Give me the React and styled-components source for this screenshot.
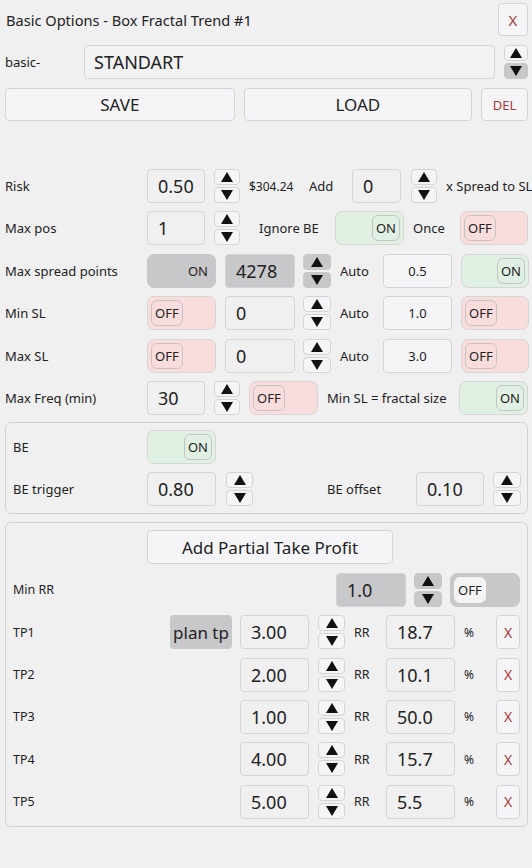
import React from "react";
import styled, { createGlobalStyle, css } from "styled-components";

const GlobalStyle = createGlobalStyle`
  html, body {
    margin: 0;
    padding: 0;
    background: #f0f0f0;
  }
  body {
    font-family: "Noto Sans", "Open Sans", Arial, sans-serif;
    color: #222;
  }
`;

const Page = styled.div`
  width: 532px;
  min-height: 868px;
  box-sizing: border-box;
  padding: 3px 4px 0 5px;
  background: #f0f0f0;
  overflow: hidden;
`;

const TitleBar = styled.div`
  display: flex;
  align-items: center;
  justify-content: space-between;
  height: 33px;
`;

const Title = styled.div`
  font-size: 14.6px;
  padding-left: 1px;
`;

const SmallButton = styled.button`
  width: ${(p) => p.w || 30}px;
  height: ${(p) => p.h || 33}px;
  padding: 0;
  border: 1px solid #d4d4d6;
  border-radius: 4px;
  background: #f5f5f7;
  color: #a83a3a;
  font-family: inherit;
  font-size: ${(p) => p.fs || 14}px;
  display: flex;
  align-items: center;
  justify-content: center;
`;

const PresetRow = styled.div`
  display: flex;
  align-items: center;
  margin-top: 9px;
  height: 34px;
`;

const PresetLabel = styled.div`
  width: 79px;
  font-size: 13px;
`;

const PresetBox = styled.div`
  flex: 1;
  height: 34px;
  box-sizing: border-box;
  border: 1px solid #d4d4d6;
  border-radius: 4px;
  background: #f2f2f3;
  font-size: 18px;
  display: flex;
  align-items: center;
  padding-left: 9px;
  margin-right: 9px;
`;

const ActionRow = styled.div`
  display: flex;
  gap: 9px;
  margin-top: 9px;
  height: 33px;
`;

const ActionButton = styled.button`
  width: ${(p) => p.w}px;
  height: 33px;
  border: 1px solid #d4d4d6;
  border-radius: 4px;
  background: #f5f5f7;
  font-family: inherit;
  font-size: 17px;
  color: #222;
  padding: 0;
`;

const Form = styled.div`
  display: flex;
  flex-direction: column;
  gap: 8.4px;
  margin-top: 48px;
`;

const Row = styled.div`
  display: flex;
  align-items: center;
  height: 34px;
  gap: 9px;
`;

const Label = styled.div`
  width: ${(p) => p.w || 133}px;
  flex: none;
  font-size: ${(p) => p.fs || 13}px;
  white-space: nowrap;
`;

const Text = styled.div`
  flex: none;
  width: ${(p) => (p.w ? `${p.w}px` : "auto")};
  font-size: ${(p) => p.fs || 13}px;
  white-space: nowrap;
  margin-left: ${(p) => p.ml || 0}px;
`;

const Field = styled.div`
  flex: none;
  width: ${(p) => p.w}px;
  height: 34px;
  box-sizing: border-box;
  border: 1px solid #d4d4d6;
  border-radius: 4px;
  background: ${(p) => (p.grey ? "#c8c8ca" : p.light ? "#f5f5f7" : "#f0f0f0")};
  display: flex;
  align-items: center;
  font-size: ${(p) => (p.small ? 13 : 18)}px;
  justify-content: ${(p) => (p.center ? "center" : "flex-start")};
  padding-left: ${(p) => (p.center ? 0 : 10)}px;
  margin-left: ${(p) => p.ml || 0}px;
`;

const SpinWrap = styled.div`
  flex: none;
  width: ${(p) => p.w || 26}px;
  height: 34px;
  display: flex;
  flex-direction: column;
  gap: 2px;
  margin-left: ${(p) => p.ml || 0}px;
`;

const SpinHalf = styled.div`
  flex: 1;
  box-sizing: border-box;
  border: 1px solid ${(p) => (p.grey ? "#c8c8ca" : "#d4d4d6")};
  border-radius: 4px;
  background: ${(p) => (p.grey ? "#c8c8ca" : "#f5f5f7")};
  display: flex;
  align-items: center;
  justify-content: center;
`;

const Tri = styled.svg`
  width: 12px;
  height: 10px;
  display: block;
`;

const tones = {
  green: "#e0f1e3",
  red: "#f9dcdc",
  grey: "#c8c8ca",
};

const Track = styled.div`
  flex: none;
  width: ${(p) => p.w || 69}px;
  height: 34px;
  box-sizing: border-box;
  border: 1px solid ${(p) => (p.tone === "grey" ? "#c8c8ca" : "#d6d6d6")};
  border-radius: 7px;
  background: ${(p) => tones[p.tone]};
  display: flex;
  align-items: center;
  justify-content: ${(p) => (p.on ? "flex-end" : "flex-start")};
  padding: 0 3px;
  margin-left: ${(p) => p.ml || 0}px;
`;

const Knob = styled.div`
  height: 26px;
  min-width: 26px;
  box-sizing: border-box;
  padding: 0 3px;
  border: 1px solid #c4c4c4;
  border-radius: 6px;
  font-size: 13px;
  display: flex;
  align-items: center;
  justify-content: center;
  ${(p) =>
    p.light &&
    css`
      background: #f4f4f4;
      border-color: #f4f4f4;
    `}
`;

const Panel = styled.div`
  margin-top: ${(p) => p.mt || 8}px;
  border: 1px solid #d2d2d2;
  border-radius: 6px;
  padding: 7px;
  display: flex;
  flex-direction: column;
  gap: 8.4px;
`;

const PanelButton = styled.button`
  width: 246px;
  height: 34px;
  margin-left: 134px;
  border: 1px solid #d4d4d6;
  border-radius: 4px;
  background: #f5f5f7;
  font-family: inherit;
  font-size: 17px;
  color: #222;
  padding: 0;
`;

const Right = styled.div`
  margin-left: auto;
  display: flex;
  align-items: center;
  gap: 9px;
`;

const PlanTp = styled.div`
  width: 62px;
  height: 34px;
  border-radius: 4px;
  background: #c8c8ca;
  font-size: 17px;
  display: flex;
  align-items: center;
  justify-content: center;
`;

const Spinner = ({ grey, w, ml }) => (
  <SpinWrap w={w} ml={ml}>
    <SpinHalf grey={grey}>
      <Tri viewBox="0 0 12 10">
        <path d="M6 0 L12 10 L0 10 Z" fill="#111" />
      </Tri>
    </SpinHalf>
    <SpinHalf grey={grey}>
      <Tri viewBox="0 0 12 10">
        <path d="M0 0 L12 0 L6 10 Z" fill="#111" />
      </Tri>
    </SpinHalf>
  </SpinWrap>
);

const Toggle = ({ on, tone, w, ml }) => (
  <Track on={on} tone={tone || (on ? "green" : "red")} w={w} ml={ml}>
    <Knob light={tone === "grey" && !on}>{on ? "ON" : "OFF"}</Knob>
  </Track>
);

const tps = [
  { name: "TP1", rr: "3.00", pct: "18.7", plan: true },
  { name: "TP2", rr: "2.00", pct: "10.1" },
  { name: "TP3", rr: "1.00", pct: "50.0" },
  { name: "TP4", rr: "4.00", pct: "15.7" },
  { name: "TP5", rr: "5.00", pct: "5.5" },
];

export default function App() {
  return (
    <>
      <GlobalStyle />
      <Page>
        <TitleBar>
          <Title>Basic Options - Box Fractal Trend #1</Title>
          <SmallButton w={30} fs={15}>
            X
          </SmallButton>
        </TitleBar>

        <PresetRow>
          <PresetLabel>basic-</PresetLabel>
          <PresetBox>STANDART</PresetBox>
          <SpinWrap w={24}>
            <SpinHalf>
              <Tri viewBox="0 0 12 10">
                <path d="M6 0 L12 10 L0 10 Z" fill="#111" />
              </Tri>
            </SpinHalf>
            <SpinHalf grey>
              <Tri viewBox="0 0 12 10">
                <path d="M0 0 L12 0 L6 10 Z" fill="#111" />
              </Tri>
            </SpinHalf>
          </SpinWrap>
        </PresetRow>

        <ActionRow>
          <ActionButton w={230}>SAVE</ActionButton>
          <ActionButton w={229}>LOAD</ActionButton>
          <SmallButton w={47} fs={13}>
            DEL
          </SmallButton>
        </ActionRow>

        <Form>
          <Row>
            <Label>Risk</Label>
            <Field w={58}>0.50</Field>
            <Spinner />
            <Text w={51} fs={12}>
              $304.24
            </Text>
            <Text w={34}>Add</Text>
            <Field w={49}>0</Field>
            <Spinner ml={1} />
            <Text>x Spread to SL</Text>
          </Row>
          <Row>
            <Label>Max pos</Label>
            <Field w={58}>1</Field>
            <Spinner />
            <Text w={67} ml={10}>
              Ignore BE
            </Text>
            <Toggle on w={69} />
            <Text w={38}>Once</Text>
            <Toggle on={false} w={68} />
          </Row>
          <Row>
            <Label>Max spread points</Label>
            <Toggle on tone="grey" w={69} />
            <Field w={70} grey>
              4278
            </Field>
            <Spinner grey w={28} ml={-1} />
            <Text w={34}>Auto</Text>
            <Field w={69} light small center>
              0.5
            </Field>
            <Toggle on w={68} />
          </Row>
          <Row>
            <Label>Min SL</Label>
            <Toggle on={false} w={69} />
            <Field w={70}>0</Field>
            <Spinner w={28} ml={-1} />
            <Text w={34}>Auto</Text>
            <Field w={69} light small center>
              1.0
            </Field>
            <Toggle on={false} w={68} />
          </Row>
          <Row>
            <Label>Max SL</Label>
            <Toggle on={false} w={69} />
            <Field w={70}>0</Field>
            <Spinner w={28} ml={-1} />
            <Text w={34}>Auto</Text>
            <Field w={69} light small center>
              3.0
            </Field>
            <Toggle on={false} w={68} />
          </Row>
          <Row>
            <Label>Max Freq (min)</Label>
            <Field w={58}>30</Field>
            <Spinner />
            <Toggle on={false} w={69} />
            <Text w={123}>Min SL = fractal size</Text>
            <Toggle on w={69} />
          </Row>
        </Form>

        <Panel mt={7}>
          <Row>
            <Label w={125}>BE</Label>
            <Toggle on w={69} />
          </Row>
          <Row>
            <Label w={125}>BE trigger</Label>
            <Field w={69}>0.80</Field>
            <Spinner w={27} ml={1} />
            <Text w={80} ml={65}>
              BE offset
            </Text>
            <Field w={68}>0.10</Field>
            <Spinner w={28} />
          </Row>
        </Panel>

        <Panel mt={8}>
          <PanelButton>Add Partial Take Profit</PanelButton>
          <Row>
            <Label w={80} fs={12.5}>
              Min RR
            </Label>
            <Right>
              <Field w={70} grey>
                1.0
              </Field>
              <Spinner grey w={28} ml={-1} />
              <Toggle on={false} tone="grey" w={70} ml={-1} />
            </Right>
          </Row>
          {tps.map((tp) => (
            <Row key={tp.name}>
              <Label w={80} fs={12.5}>
                {tp.name}
              </Label>
              <Right>
                {tp.plan && <PlanTp>plan tp</PlanTp>}
                <Field w={69} ml={-1}>
                  {tp.rr}
                </Field>
                <Spinner w={27} />
                <Text w={23} fs={12.5}>
                  RR
                </Text>
                <Field w={69}>{tp.pct}</Field>
                <Text w={23} fs={12}>
                  %
                </Text>
                <SmallButton w={24} h={34} fs={14}>
                  X
                </SmallButton>
              </Right>
            </Row>
          ))}
        </Panel>
      </Page>
    </>
  );
}
